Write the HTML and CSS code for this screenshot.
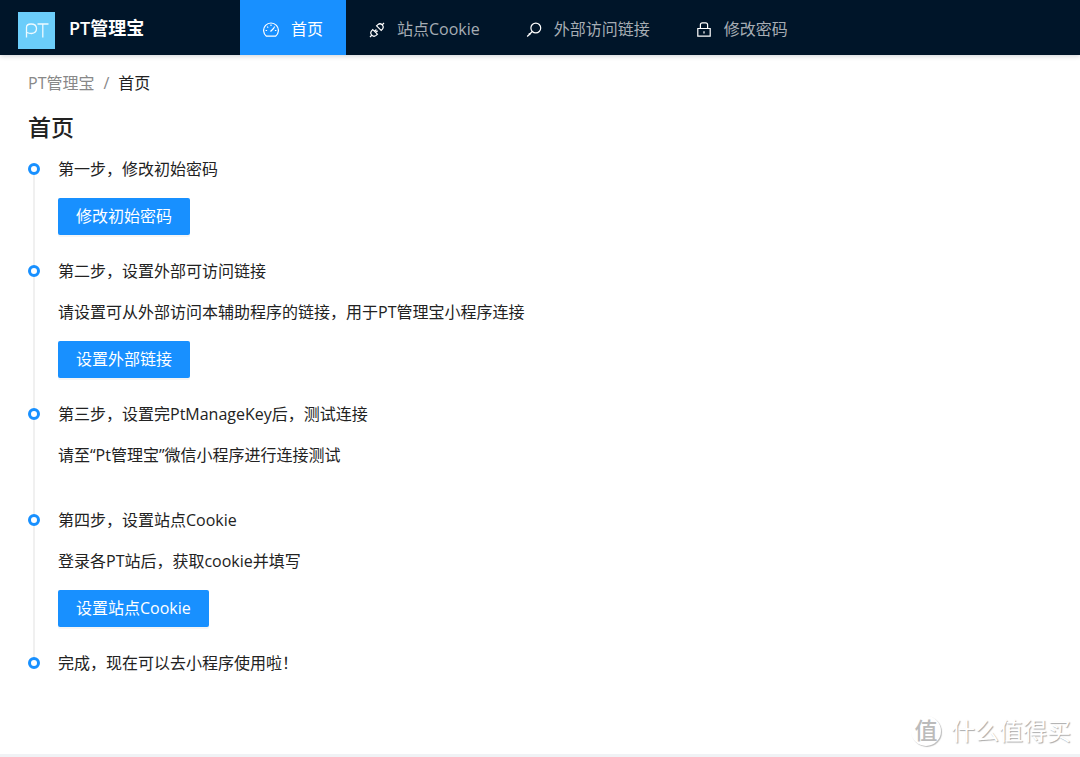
FILE: index.html
```html
<!DOCTYPE html>
<html lang="zh-CN">
<head>
<meta charset="utf-8">
<meta name="viewport" content="width=device-width, initial-scale=1">
<title>PT管理宝</title>
<link rel="stylesheet" href="styles.css">
</head>
<body>
<header class="header">
  <a class="brand" href="#">
    <svg class="logo" viewBox="0 0 37 37" aria-hidden="true">
      <rect width="37" height="37" fill="#6bcdfa"/>
      <path d="M8.500 25.500V15.500Q8.500 12 13 12Q18.500 12 18.500 16.500Q18.500 21 13.500 21.500Q11 21.500 9 20.500M19.500 12H30.500M24.800 12V25.500" fill="none" stroke="#eefaff" stroke-width="1.300"/>
    </svg>
    <span class="brand-name">PT管理宝</span>
  </a>
  <nav class="menu">
    <a class="menu-item active" href="#">
      <svg class="icon" viewBox="0 0 16 16" aria-hidden="true"><path d="M3.400 14.200A7.400 7.400 0 1 1 12.600 14.200ZM7.500 9.500 11 6M8 2.600V4M2.600 8.500H4.100M11.900 8.500H13.400M4.200 4.700 5.200 5.700M10.800 5.700 11.800 4.700"/></svg>
      <span>首页</span>
    </a>
    <a class="menu-item" href="#">
      <svg class="icon" viewBox="0 0 16 16" aria-hidden="true"><path d="M1 15 3 13M13 3 15 1M3.800 7.600 8.400 12.200 7.100 13.400A3.200 3.200 0 0 1 2.600 8.900ZM7.600 3.800 12.200 8.400 13.400 7.100A3.200 3.200 0 0 0 8.900 2.600ZM5.600 9.400 7.400 7.500M6.700 10.500 8.600 8.700"/></svg>
      <span>站点Cookie</span>
    </a>
    <a class="menu-item" href="#">
      <svg class="icon" viewBox="0 0 16 16" aria-hidden="true"><circle cx="9.800" cy="6" r="4.900"/><path d="M6.300 9.500 1.200 14.500M2.800 11.300 4.300 12.800"/></svg>
      <span>外部访问链接</span>
    </a>
    <a class="menu-item" href="#">
      <svg class="icon" viewBox="0 0 16 16" aria-hidden="true"><path d="M1.800 6.500H14.200V14.200H1.800ZM4.400 6.500V2.800Q4.400 .8 6.400 .8H9.600Q11.600 .8 11.600 2.800V6.500M8 9.300V11.500"/></svg>
      <span>修改密码</span>
    </a>
  </nav>
</header>
<main class="content">
  <nav class="breadcrumb" aria-label="面包屑">
    <a class="crumb" href="#">PT管理宝</a>
    <span class="separator">/</span>
    <span class="current">首页</span>
  </nav>
  <h1 class="title">首页</h1>
  <ol class="timeline">
    <li class="step">
      <p class="text">第一步，修改初始密码</p>
      <button class="button" type="button">修改初始密码</button>
    </li>
    <li class="step">
      <p class="text">第二步，设置外部可访问链接</p>
      <p class="text">请设置可从外部访问本辅助程序的链接，用于PT管理宝小程序连接</p>
      <button class="button" type="button">设置外部链接</button>
    </li>
    <li class="step">
      <p class="text">第三步，设置完PtManageKey后，测试连接</p>
      <p class="text">请至“Pt管理宝”微信小程序进行连接测试</p>
    </li>
    <li class="step">
      <p class="text">第四步，设置站点Cookie</p>
      <p class="text">登录各PT站后，获取cookie并填写</p>
      <button class="button" type="button">设置站点Cookie</button>
    </li>
    <li class="step">
      <p class="text">完成，现在可以去小程序使用啦！</p>
    </li>
  </ol>
</main>
<div class="watermark"><span class="seal">值</span><span>什么值得买</span></div>
</body>
</html>
```
FILE: styles.css
```css
*,
*::before,
*::after {
  box-sizing: border-box;
}

body {
  position: relative;
  display: flex;
  flex-direction: column;
  min-height: 100vh;
  margin: 0;
  padding-bottom: 3px;
  background: #f0f2f5;
  color: #222;
  font-family: "Open Sans", "Noto Sans CJK SC", sans-serif;
  font-size: 16px;
  line-height: 25px;
}

a {
  color: inherit;
  text-decoration: none;
}

.header {
  position: relative;
  display: flex;
  height: 55px;
  background: #001529;
  box-shadow: 0 1px 5px rgba(0, 21, 41, 0.2);
}

.brand {
  display: flex;
  align-items: center;
  gap: 14px;
  width: 240px;
  padding-left: 18px;
  color: #fff;
}

.logo {
  width: 37px;
  height: 37px;
  margin-top: 6px;
}

.brand-name {
  padding-top: 2px;
  font-size: 18px;
  font-weight: 600;
}

.menu {
  display: flex;
}

.menu-item {
  display: flex;
  align-items: center;
  gap: 12px;
  padding: 4px 23px 0;
  color: #a6adb4;
  white-space: nowrap;
}

.active {
  background: #1890ff;
  color: #fff;
}

.icon {
  width: 16px;
  height: 16px;
  fill: none;
  stroke: #fff;
  stroke-width: 1.2;
}

.content {
  flex: 1;
  padding: 16px 28px 24px;
  background: #fff;
}

.breadcrumb {
  display: flex;
  gap: 9px;
}

.crumb,
.separator {
  color: #888;
}

.title {
  margin: 15px 0 14px;
  font-size: 23px;
  font-weight: 500;
  line-height: 32px;
}

.timeline {
  margin: 0;
  padding: 0;
  list-style: none;
}

.step {
  position: relative;
  padding: 0 0 24px 30px;
}

.step::before {
  content: "";
  position: absolute;
  top: 12px;
  left: 5px;
  width: 2px;
  height: 100%;
  background: #f0f0f0;
}

.step:last-child::before {
  display: none;
}

.step::after {
  content: "";
  position: absolute;
  top: 6px;
  left: 0;
  width: 12px;
  height: 12px;
  border: 3px solid #1890ff;
  border-radius: 50%;
  background: #fff;
  z-index: 1;
}

.text {
  margin: 0 0 16px;
}

.button {
  display: block;
  height: 37px;
  padding: 0 18px;
  border: 0;
  border-radius: 2px;
  background: #1890ff;
  color: #fff;
  font: inherit;
  box-shadow: 0 2px 0 rgba(0, 0, 0, 0.04);
}

.watermark {
  position: absolute;
  right: 9px;
  bottom: 11px;
  display: flex;
  align-items: center;
  gap: 10px;
  color: #fff;
  font-size: 24px;
  line-height: 30px;
  text-shadow: 1px 1px 1px #aaa;
}

.seal {
  width: 30px;
  height: 30px;
  border-radius: 50%;
  box-shadow: 1px 1px 1px #bbb;
  color: #bbb;
  font-size: 23px;
  font-weight: 500;
  line-height: 28px;
  text-align: center;
  text-shadow: none;
}
```
